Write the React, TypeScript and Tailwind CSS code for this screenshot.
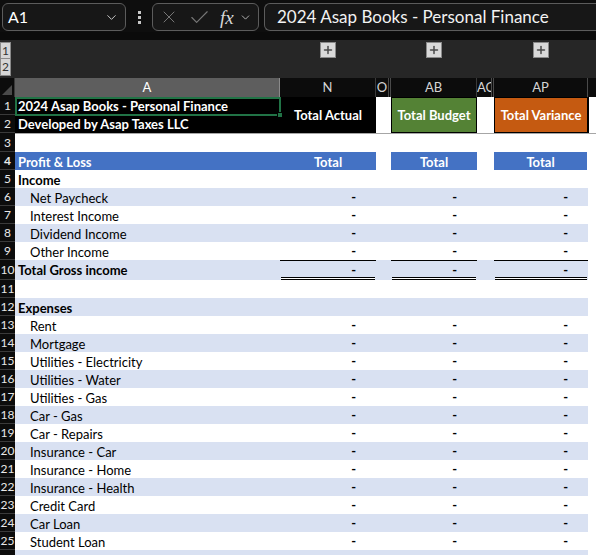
import React from 'react';
import { X, Check, ChevronDown, Plus } from 'lucide-react';

type Line = { n: number; label?: string; bold?: boolean; indent?: boolean; dash?: boolean };

const lines: Line[] = [
  { n: 5, label: 'Income', bold: true },
  { n: 6, label: 'Net Paycheck', indent: true, dash: true },
  { n: 7, label: 'Interest Income', indent: true, dash: true },
  { n: 8, label: 'Dividend Income', indent: true, dash: true },
  { n: 9, label: 'Other Income', indent: true, dash: true },
  { n: 10, label: 'Total Gross income', bold: true, dash: true },
  { n: 11 },
  { n: 12, label: 'Expenses', bold: true },
  { n: 13, label: 'Rent', indent: true, dash: true },
  { n: 14, label: 'Mortgage', indent: true, dash: true },
  { n: 15, label: 'Utilities - Electricity', indent: true, dash: true },
  { n: 16, label: 'Utilities - Water', indent: true, dash: true },
  { n: 17, label: 'Utilities - Gas', indent: true, dash: true },
  { n: 18, label: 'Car - Gas', indent: true, dash: true },
  { n: 19, label: 'Car - Repairs', indent: true, dash: true },
  { n: 20, label: 'Insurance - Car', indent: true, dash: true },
  { n: 21, label: 'Insurance - Home', indent: true, dash: true },
  { n: 22, label: 'Insurance - Health', indent: true, dash: true },
  { n: 23, label: 'Credit Card', indent: true, dash: true },
  { n: 24, label: 'Car Loan', indent: true, dash: true },
  { n: 25, label: 'Student Loan', indent: true, dash: true },
  { n: 26 },
];

function RowHead({ n, tall }: { n: number; tall?: boolean }) {
  return (
    <div
      className={`flex w-[15px] shrink-0 items-center justify-center overflow-hidden border-b border-[#3a3a3a] bg-[#0c0c0c] text-[12px] leading-none text-[#e8e8e8] ${
        tall ? 'h-[20px]' : 'h-[18px]'
      }`}
    >
      {n}
    </div>
  );
}

function Val({ w, dash, total }: { w: string; dash?: boolean; total?: boolean }) {
  return (
    <div className={`${w} relative shrink-0 ${total ? 'h-[20px] border-t border-black' : 'h-[18px]'}`}>
      {dash && <div className="pr-[20px] text-right text-[13px] font-bold leading-[19px] text-black">-</div>}
      {total && <div className="absolute bottom-0 left-[1px] right-[1px] h-[3px] border-y border-black bg-white" />}
    </div>
  );
}

function DataRow({ line }: { line: Line }) {
  const striped = line.n >= 6 && line.n % 2 === 0;
  const total = line.n === 10;
  return (
    <div className={`flex ${total ? 'h-[20px]' : 'h-[18px]'}`}>
      <RowHead n={line.n} tall={total} />
      <div className={`flex w-[573px] shrink-0 ${striped ? 'bg-[#d9e1f2]' : 'bg-white'}`}>
        <div
          className={`h-[18px] w-[265px] shrink-0 truncate text-[13px] leading-[20px] text-black ${
            line.bold ? 'pl-[3px] font-bold' : 'pl-[15px]'
          }`}
        >
          {line.label}
        </div>
        <Val w="w-[96px]" dash={line.dash} total={total} />
        <div className="w-[15px] shrink-0" />
        <Val w="w-[86px]" dash={line.dash} total={total} />
        <div className="w-[17px] shrink-0" />
        <Val w="w-[94px]" dash={line.dash} total={total} />
      </div>
      <div className="flex-1 bg-white" />
    </div>
  );
}

function PlusBox() {
  return (
    <div className="flex h-[16px] w-[16px] items-center justify-center border border-[#8a8a8a] bg-[#d9d9d9]">
      <Plus size={12} strokeWidth={3} className="text-[#4a4a4a]" />
    </div>
  );
}

export default function App() {
  return (
    <div className="h-[555px] w-[596px] overflow-hidden bg-white font-['Lato',sans-serif]">
      {/* Formula bar */}
      <div className="flex h-[32px] items-center bg-[#0e0e0e] pl-[2px] pt-[2px]">
        <div className="flex h-[28px] w-[124px] shrink-0 items-center justify-between rounded-md border border-[#5c5c5c] bg-[#171717] pl-[5px] pr-[6px]">
          <span className="text-[16px] text-white">A1</span>
          <ChevronDown size={15} strokeWidth={1.5} className="text-[#d0d0d0]" />
        </div>
        <div className="ml-[6px] flex w-[14px] shrink-0 flex-col items-center gap-[2px]">
          <span className="h-[3px] w-[3px] bg-[#c8c8c8]" />
          <span className="h-[3px] w-[3px] bg-[#c8c8c8]" />
          <span className="h-[3px] w-[3px] bg-[#c8c8c8]" />
        </div>
        <div className="ml-[6px] flex h-[28px] w-[107px] shrink-0 items-center rounded-md border border-[#5c5c5c] bg-[#171717] pl-[6px]">
          <X size={20} strokeWidth={1.2} className="text-[#777777]" />
          <Check size={23} strokeWidth={1.2} className="ml-[9px] text-[#777777]" />
          <span className="ml-[9px] font-['Liberation_Serif',serif] text-[19px] italic leading-none text-[#d8d8d8]">fx</span>
          <ChevronDown size={13} strokeWidth={1.5} className="ml-[5px] text-[#d0d0d0]" />
        </div>
        <div className="ml-[5px] flex h-[28px] flex-1 items-center rounded-l-md border border-r-0 border-[#5c5c5c] bg-[#171717] pl-[12px]">
          <span className="text-[17px] text-[#f2f2f2]">2024 Asap Books - Personal Finance</span>
        </div>
      </div>
      <div className="h-[8px] bg-[#0b0b0b]" />

      {/* Outline area */}
      <div className="flex h-[38px] bg-[#262626] pt-[2px]">
        <div className="flex w-[11px] flex-col">
          <div className="flex h-[17px] items-center justify-end border border-[#8a8a8a] bg-[#d6d6d6] pr-[1px] text-[12px] leading-none text-[#333333]">1</div>
          <div className="flex h-[17px] items-center justify-end border border-t-0 border-[#8a8a8a] bg-[#d6d6d6] pr-[1px] text-[12px] leading-none text-[#333333]">2</div>
        </div>
        <div className="w-[269px]" />
        <div className="flex w-[96px] justify-center">
          <PlusBox />
        </div>
        <div className="w-[15px]" />
        <div className="flex w-[86px] justify-center">
          <PlusBox />
        </div>
        <div className="w-[17px]" />
        <div className="flex w-[94px] justify-center">
          <PlusBox />
        </div>
      </div>

      {/* Column headers */}
      <div className="flex h-[19px] bg-[#0c0c0c] text-[13px] leading-[19px] text-[#d4d4d4]">
        <div className="flex w-[15px] shrink-0 items-end justify-end border-r border-[#3a3a3a] p-[2px]">
          <svg width="10" height="10" viewBox="0 0 10 10">
            <path d="M10 0 L10 10 L0 10 Z" fill="#4a4a4a" />
          </svg>
        </div>
        <div className="w-[265px] shrink-0 border-r border-[#8a8a8a] bg-[#5e5e5e] text-center text-white">A</div>
        <div className="w-[96px] shrink-0 border-r border-[#3a3a3a] text-center">N</div>
        <div className="w-[15px] shrink-0 border-r-[3px] border-double border-[#4a4a4a] text-center">O</div>
        <div className="w-[86px] shrink-0 border-r border-[#3a3a3a] text-center">AB</div>
        <div className="w-[17px] shrink-0 overflow-hidden border-r-[3px] border-double border-[#4a4a4a] text-center">AC</div>
        <div className="w-[94px] shrink-0 border-r border-[#4a4a4a] text-center">AP</div>
        <div className="flex-1" />
      </div>

      {/* Rows 1-2 */}
      <div className="flex h-[36px]">
        <div className="flex w-[15px] shrink-0 flex-col">
          <RowHead n={1} />
          <RowHead n={2} />
        </div>
        <div className="relative w-[265px] shrink-0 bg-black text-[13px] font-bold text-white">
          <div className="h-[18px] pl-[3px] leading-[19px]">2024 Asap Books - Personal Finance</div>
          <div className="h-[18px] pl-[3px] leading-[19px]">Developed by Asap Taxes LLC</div>
          <div className="absolute left-0 top-0 h-[19px] w-[266px] border-2 border-[#217346]" />
          <div className="absolute left-[262px] top-[15px] h-[6px] w-[6px] border border-black bg-[#217346]" />
        </div>
        <div className="flex w-[96px] shrink-0 items-center justify-center bg-black pt-[1px] text-[13px] font-bold text-white">Total Actual</div>
        <div className="w-[15px] shrink-0 bg-white" />
        <div className="flex w-[86px] shrink-0 items-center justify-center border border-black bg-[#548235] pt-[1px] text-[13px] font-bold text-white">Total Budget</div>
        <div className="w-[17px] shrink-0 bg-white" />
        <div className="flex w-[95px] shrink-0 items-center justify-center border border-r-2 border-black bg-[#c55a11] pt-[1px] text-[13px] font-bold text-white">Total Variance</div>
        <div className="flex-1 bg-white" />
      </div>

      {/* Row 3 */}
      <div className="flex h-[19px]">
        <div className="flex h-[19px] w-[15px] shrink-0 items-center justify-center overflow-hidden border-b border-[#3a3a3a] bg-[#0c0c0c] pt-[1px] text-[12px] leading-none text-[#e8e8e8]">
          3
        </div>
        <div className="flex-1 border-t border-[#a6a6a6] bg-white" />
      </div>

      {/* Row 4 */}
      <div className="flex h-[18px] text-[13px] font-bold leading-[20px] text-white">
        <RowHead n={4} />
        <div className="w-[265px] shrink-0 bg-[#4472c4] pl-[3px]">Profit &amp; Loss</div>
        <div className="w-[96px] shrink-0 bg-[#4472c4] text-center">Total</div>
        <div className="w-[15px] shrink-0 bg-white" />
        <div className="w-[86px] shrink-0 bg-[#4472c4] text-center">Total</div>
        <div className="w-[17px] shrink-0 bg-white" />
        <div className="w-[93px] shrink-0 bg-[#4472c4] text-center">Total</div>
        <div className="flex-1 bg-white" />
      </div>

      {lines.map((l) => (
        <DataRow key={l.n} line={l} />
      ))}
    </div>
  );
}
